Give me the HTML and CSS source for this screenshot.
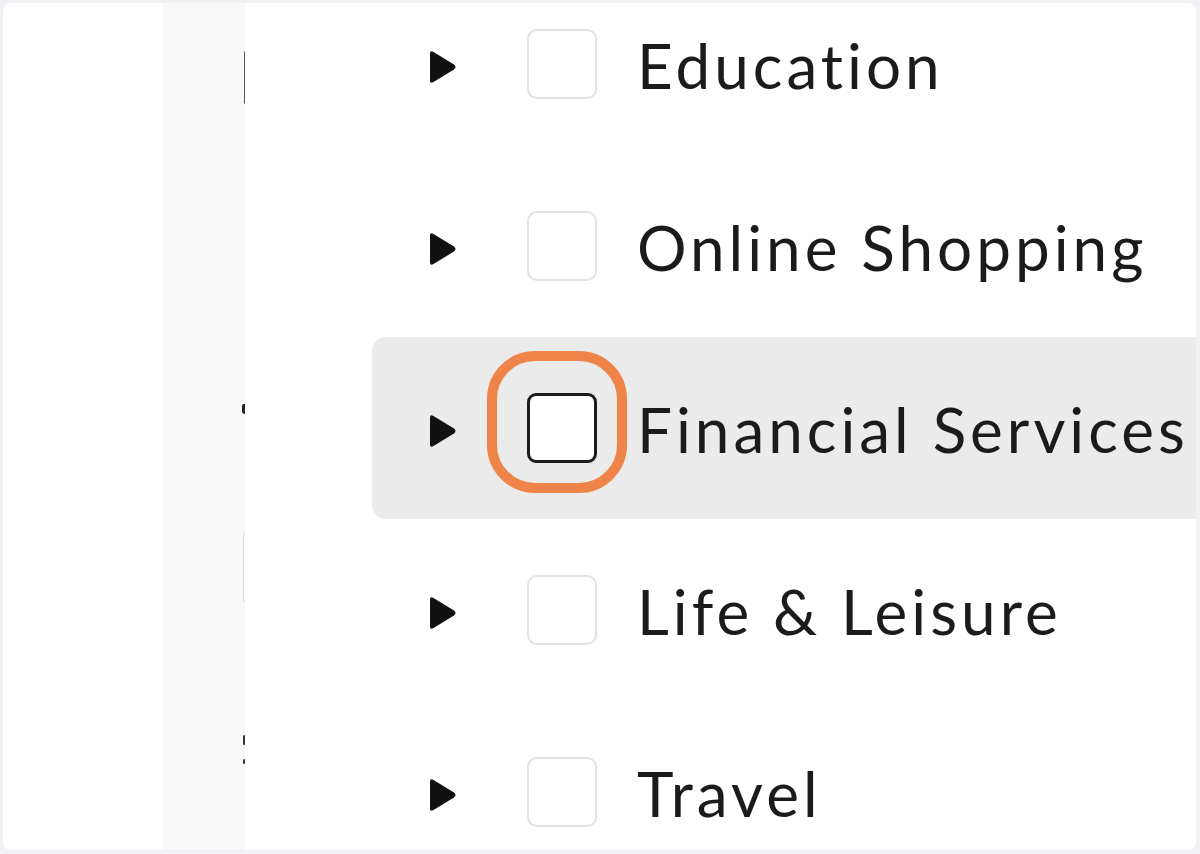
FILE: index.html
```html
<!DOCTYPE html>
<html lang="en">
<head>
<meta charset="utf-8">
<title>Categories</title>
<link rel="stylesheet" href="styles.css">
</head>
<body>
<div class="card">
  <div class="side"></div>
  <div class="strip">
    <span class="mark mark-bar"></span>
    <span class="mark mark-blob"></span>
    <span class="mark mark-edge"></span>
    <span class="mark mark-dot1"></span>
    <span class="mark mark-dot2"></span>
  </div>
  <div class="panel">
    <ul class="list">
      <li class="row">
        <svg class="caret" viewBox="0 0 30 36"><path d="M3 4.5 Q3 1 6.5 3 L27 15.5 Q30 18 27 20.5 L6.5 33 Q3 35 3 31.5 Z"/></svg>
        <span class="box"></span>
        <span class="label">Education</span>
      </li>
      <li class="row">
        <svg class="caret" viewBox="0 0 30 36"><path d="M3 4.5 Q3 1 6.5 3 L27 15.5 Q30 18 27 20.5 L6.5 33 Q3 35 3 31.5 Z"/></svg>
        <span class="box"></span>
        <span class="label">Online Shopping</span>
      </li>
      <li class="row row-active">
        <svg class="caret" viewBox="0 0 30 36"><path d="M3 4.5 Q3 1 6.5 3 L27 15.5 Q30 18 27 20.5 L6.5 33 Q3 35 3 31.5 Z"/></svg>
        <span class="box box-focus"><span class="ring"></span></span>
        <span class="label">Financial Services</span>
      </li>
      <li class="row">
        <svg class="caret" viewBox="0 0 30 36"><path d="M3 4.5 Q3 1 6.5 3 L27 15.5 Q30 18 27 20.5 L6.5 33 Q3 35 3 31.5 Z"/></svg>
        <span class="box"></span>
        <span class="label">Life &amp; Leisure</span>
      </li>
      <li class="row">
        <svg class="caret" viewBox="0 0 30 36"><path d="M3 4.5 Q3 1 6.5 3 L27 15.5 Q30 18 27 20.5 L6.5 33 Q3 35 3 31.5 Z"/></svg>
        <span class="box"></span>
        <span class="label">Travel</span>
      </li>
    </ul>
  </div>
</div>
</body>
</html>
```
FILE: styles.css
```css
* { box-sizing: border-box; }
html, body {
  margin: 0;
  padding: 0;
  width: 1200px;
  height: 854px;
  overflow: hidden;
  background: #f1f0f5;
}
body {
  padding: 3px 4px 4px 3px;
  font-family: Lato, "Noto Sans", sans-serif;
}
.card {
  width: 1193px;
  height: 847px;
  background: #fff;
  border-radius: 8px;
  overflow: hidden;
  display: flex;
}
.side {
  width: 159px;
  flex: none;
  background: #fff;
}
.strip {
  width: 86px;
  flex: none;
  background: #f8f8f8;
  border-right: 3px solid #f0f0f0;
  display: flex;
  flex-direction: column;
  align-items: flex-end;
  margin-right: -3px;
}
.mark { display: block; flex: none; }
.mark-bar {
  width: 3px; height: 53px; margin-top: 48px; margin-right: -2px;
  background: #555; border-radius: 2px;
}
.mark-blob {
  width: 5px; height: 10px; margin-top: 300px; margin-right: -2px;
  background: #222; border-radius: 2px 0 0 3px;
}
.mark-edge {
  width: 4px; height: 70px; margin-top: 118px; margin-right: -2px;
  border: 1px solid #ddd; border-right: none; border-radius: 4px 0 0 4px;
}
.mark-dot1 {
  width: 3px; height: 10px; margin-top: 133px; margin-right: -1px;
  background: #333; border-radius: 2px;
}
.mark-dot2 {
  width: 3px; height: 5px; margin-top: 14px; margin-right: -1px;
  background: #333; border-radius: 2px;
}
.panel {
  flex: 1;
  background: #fff;
  min-width: 0;
  position: relative;
}
.list {
  list-style: none;
  margin: -30px 0 0 0;
  padding: 0 0 0 127px;
}
.row {
  height: 182px;
  display: flex;
  align-items: center;
  padding-left: 55px;
  border-radius: 14px 0 0 14px;
  white-space: nowrap;
}
.row-active { background: #ebebeb; }
.caret {
  width: 30px;
  height: 36px;
  flex: none;
  fill: #111;
  margin-top: 6px;
}
.box {
  width: 70px;
  height: 70px;
  flex: none;
  margin-left: 70px;
  border: 2px solid #e2e2e2;
  border-radius: 10px;
  background: #fff;
  position: relative;
}
.box-focus {
  border: 3px solid #1c1c1c;
  border-radius: 9px;
}
.ring {
  position: absolute;
  left: -43px;
  top: -45px;
  right: -33px;
  bottom: -33px;
  border: 10px solid #ee8447;
  border-radius: 48px;
}
.label {
  margin-left: 40px;
  font-size: 62px;
  color: #1b1b1b;
  letter-spacing: 4px;
  margin-top: 2px;
}
```
